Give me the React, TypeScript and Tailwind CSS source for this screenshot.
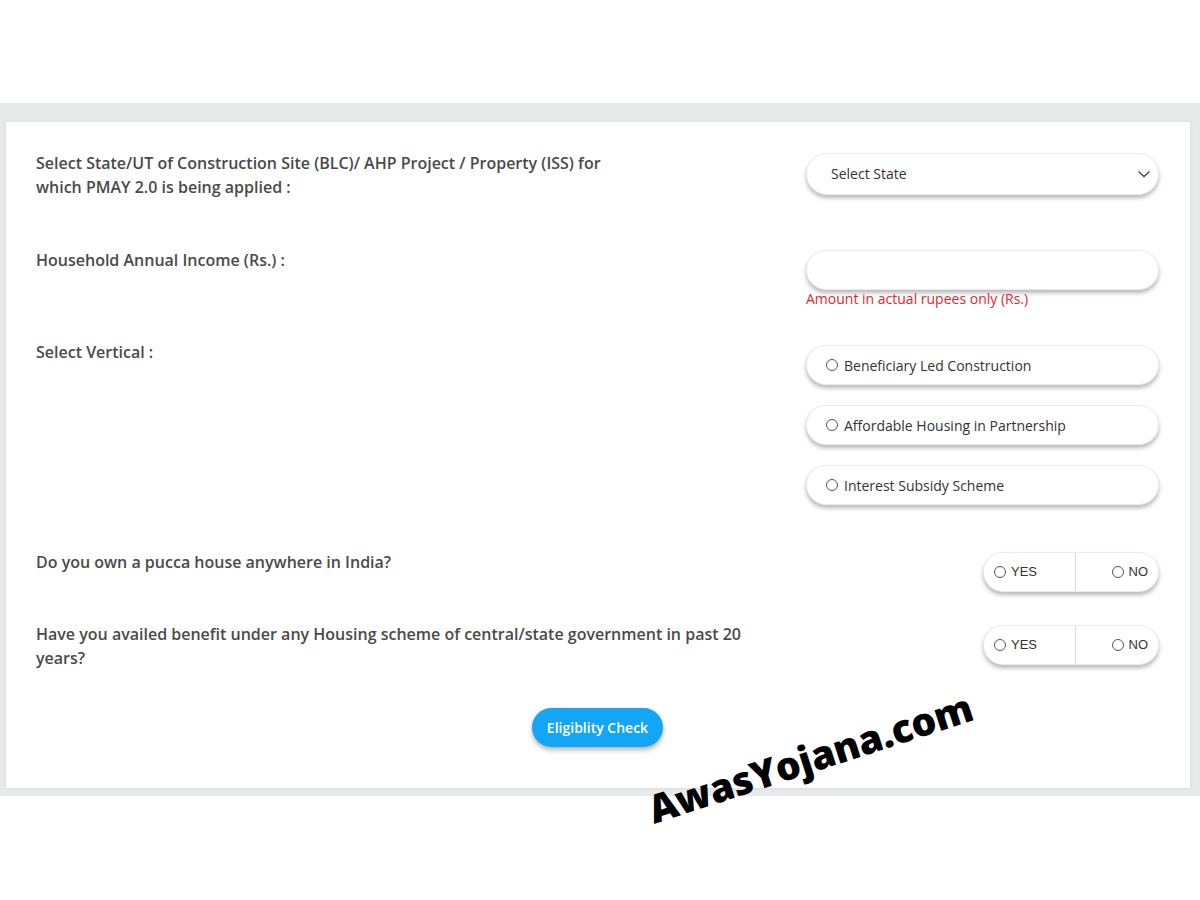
import React from "react";

const labelCls = "text-[16px] leading-6 font-semibold text-[#4a4a4a]";
const pill =
  "rounded-full bg-white border border-[#ececec] shadow-[0_3px_4px_rgba(0,0,0,0.28)]";

function Radio() {
  return <span className="inline-block h-[12px] w-[12px] shrink-0 rounded-full border border-[#555] bg-white" />;
}

function VerticalOption({ label }: { label: string }) {
  return (
    <div className={`${pill} flex h-[40px] items-center gap-[6px] pl-[19px] text-[14px] text-[#333]`}>
      <Radio />
      <span>{label}</span>
    </div>
  );
}

function YesNo({ offset }: { offset: string }) {
  return (
    <div
      className={`${pill} ${offset} flex h-[40px] w-[176px] items-stretch font-['Liberation_Sans',Arial,sans-serif] text-[13px] text-[#333]`}
    >
      <div className="flex w-[92px] items-center gap-[5px] border-r border-[#dcdcdc] pl-[10px]">
        <Radio />
        <span>YES</span>
      </div>
      <div className="flex flex-1 items-center justify-end gap-[5px] pr-[10px]">
        <Radio />
        <span>NO</span>
      </div>
    </div>
  );
}

export default function App() {
  return (
    <div className="relative h-[900px] w-[1200px] overflow-hidden bg-white font-['Open_Sans',sans-serif]">
      <div className="h-[103px]" />
      <div className="bg-[#e8e9e9] pt-[19px] pb-[8px] pl-[6px] pr-[10px]">
        <div className="flex flex-col bg-white pt-[29px] pr-[31px] pb-[41px] pl-[30px] shadow-[0_0_4px_rgba(0,0,0,0.08)]">
          {/* state */}
          <div className="flex items-start justify-between">
            <p className={labelCls}>
              Select State/UT of Construction Site (BLC)/ AHP Project / Property (ISS) for
              <br />
              which PMAY 2.0 is being applied :
            </p>
            <div className={`${pill} mt-[2px] flex h-[42px] w-[353px] items-center justify-between pb-[1px] pl-[24px] pr-[7px] text-[14px] text-[#333]`}>
              <span>Select State</span>
              <svg width="14" height="14" viewBox="0 0 14 14" fill="none" stroke="#444" strokeWidth="1.3">
                <path d="M1.5 4.5 7 9.5l5.5-5" />
              </svg>
            </div>
          </div>

          {/* income */}
          <div className="mt-[49px] flex items-start justify-between">
            <p className={labelCls}>Household Annual Income (Rs.) :</p>
            <div className="mt-[2px] flex w-[353px] flex-col">
              <div className={`${pill} h-[40px]`} />
              <p className="text-[14px] leading-[18px] text-[#e3262f]">Amount in actual rupees only (Rs.)</p>
            </div>
          </div>

          {/* vertical */}
          <div className="mt-[32px] flex items-start justify-between">
            <p className={labelCls}>Select Vertical :</p>
            <div className="mt-[5px] flex w-[353px] flex-col gap-[20px]">
              <VerticalOption label="Beneficiary Led Construction" />
              <VerticalOption label="Affordable Housing in Partnership" />
              <VerticalOption label="Interest Subsidy Scheme" />
            </div>
          </div>

          {/* pucca house */}
          <div className="mt-[45px] flex items-start justify-between">
            <p className={labelCls}>Do you own a pucca house anywhere in India?</p>
            <YesNo offset="mt-[2px]" />
          </div>

          {/* availed benefit */}
          <div className="mt-[30px] flex items-start justify-between">
            <p className={labelCls}>
              Have you availed benefit under any Housing scheme of central/state government in past 20
              <br />
              years?
            </p>
            <YesNo offset="mt-[3px]" />
          </div>

          <div className="mt-[38px] flex justify-center">
            <button className="h-[39px] w-[131px] rounded-full bg-[#13a6f5] text-[14px] font-semibold text-white shadow-[0_3px_5px_rgba(0,0,0,0.3)]">
              Eligiblity Check
            </button>
          </div>
        </div>
      </div>

      {/* watermark */}
      <div className="absolute left-[810px] top-[757px] -translate-x-1/2 -translate-y-1/2 -rotate-[18deg] whitespace-nowrap font-['Open_Sans',sans-serif] text-[39px] font-extrabold leading-none tracking-[-0.3px] text-black">
        AwasYojana.com
      </div>
    </div>
  );
}
